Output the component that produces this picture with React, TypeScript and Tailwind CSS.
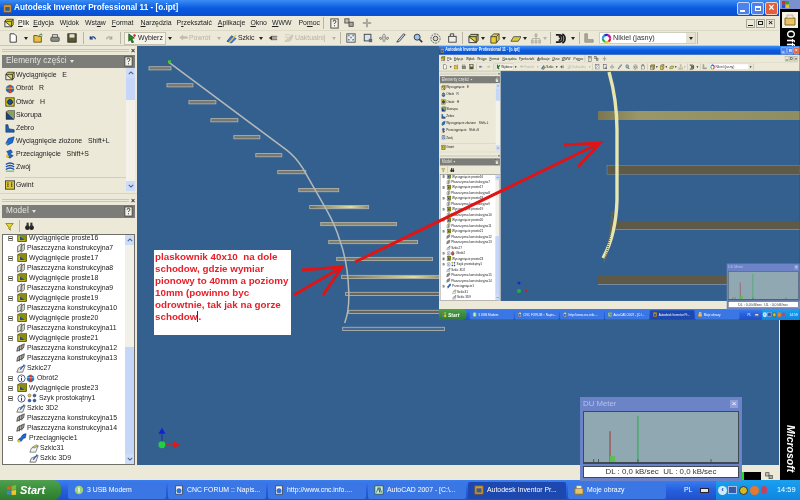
import React from 'react';

const Ico: React.FC<{ k: string; className?: string }> = ({ k, className = '' }) => {
  const shapes: Record<string, React.ReactNode> = {
    feature: <><rect x="1" y="2" width="10" height="8" fill="#d9c81e" stroke="#3a3a10" /><rect x="3.5" y="4" width="5.5" height="4.5" fill="#17508f" /><path d="M1 2l2-1.5h9V8l-1 2" fill="#8b8b1a" stroke="#3a3a10" strokeWidth=".6" /></>,
    plane: <path d="M2 4l5-3v7l-5 3zM6 4l4-3v7l-4 3z" fill="#e8e8e0" stroke="#55554f" />,
    planeDark: <><path d="M2 5l8-4-1 5-8 4z" fill="#b8b8b0" stroke="#454540" /><path d="M4 3v7M7 2v7" stroke="#454540" /></>,
    sketch: <><path d="M1 11l2-5 8-3-3 8z" fill="#eeeeee" stroke="#66665f" /><path d="M5 8l5-6" stroke="#3060b0" strokeWidth="1.6" /></>,
    sketchA: <><path d="M1 11l2-5 8-3-3 8z" fill="#f4f4ee" stroke="#77776f" /><path d="M4 5l5-3 2 2-5 2z" fill="#f0c030" stroke="#2f65c0" strokeWidth=".6" /></>,
    info: <><circle cx="6" cy="6" r="4.8" fill="#ffffff" stroke="#26305f" /><path d="M6 3v1M6 5v4" stroke="#203090" strokeWidth="1.4" /></>,
    revolve: <><ellipse cx="6" cy="6" rx="5" ry="4.5" fill="#1d6fc0" /><rect x="4.5" y="1" width="3" height="10" fill="#d93a2c" /><path d="M1 5h10" stroke="#f0d040" /></>,
    pattern: <><circle cx="3" cy="3" r="1.8" fill="#f0d030" stroke="#333" strokeWidth=".5" /><circle cx="9" cy="3" r="1.8" fill="#2a60c0" stroke="#333" strokeWidth=".5" /><circle cx="3" cy="9" r="1.8" fill="#2a60c0" stroke="#333" strokeWidth=".5" /><circle cx="9" cy="9" r="1.8" fill="#2a60c0" stroke="#333" strokeWidth=".5" /></>,
    sweep: <><path d="M1 10c1-5 3-3 4-5s2-4 6-4l-1 5c-3 0-3 2-4 3s-3 2-5 1z" fill="#1d66d0" stroke="#0e2f80" strokeWidth=".6" /><circle cx="2.5" cy="10" r="1.6" fill="#e9c820" /></>,
    hole: <><rect x="1" y="1" width="10" height="10" fill="#d9c81e" stroke="#3a3a10" /><circle cx="6" cy="6" r="3" fill="#1b4d9a" stroke="#0b1d40" /></>,
    shell: <><rect x="1.5" y="2.5" width="9" height="8.5" fill="#17408f" stroke="#222" /><path d="M1.5 2.5l2-2h8v8l-1 2.5" fill="#8ba05a" stroke="#333" strokeWidth=".6" /></>,
    rib: <path d="M1 11V2h2.5l1 5 6.5 1v3z" fill="#1f60b0" stroke="#153050" strokeWidth=".7" />,
    loft: <><path d="M1 9l3-6 7-2-2 7-6 3z" fill="#1e6ad6" stroke="#0f3080" strokeWidth=".7" /><path d="M1 9l2 2 1-3z" fill="#60b030" /></>,
    sweepP: <><path d="M2 3l5-2 2 3-3 2 4 2-4 3-4-2 2-3z" fill="#1c62c8" stroke="#143070" strokeWidth=".6" /><circle cx="3" cy="9" r="1.7" fill="#e5c520" /></>,
    coil: <><path d="M1 3c3-2 7-2 10 0M1 6c3-2 7-2 10 0M1 9c3-2 7-2 10 0" fill="none" stroke="#1c50b0" strokeWidth="1.8" /><path d="M1 11h10" stroke="#40a040" /></>,
    thread: <><rect x=".5" y="1" width="11" height="10" fill="#dcc92a" stroke="#333" /><path d="M3.5 3v6M8 3v6" stroke="#1a1a60" strokeWidth="1.5" strokeDasharray="1.2 .8" /></>,
    filter: <path d="M1 2h10L7 7v4L5 9V7z" fill="#e8d820" stroke="#5a5a10" strokeWidth=".8" />,
    bin: <><circle cx="3.5" cy="8" r="2.8" fill="#222" /><circle cx="8.5" cy="8" r="2.8" fill="#222" /><rect x="2.5" y="2" width="2.5" height="5" fill="#333" /><rect x="7" y="2" width="2.5" height="5" fill="#333" /></>,
    part: <><path d="M1 4l2-2.5h8V8l-2 2.5z" fill="#ddd22a" stroke="#333" /><path d="M1 4h8v6.5H1zM9 4l2-2.5" fill="none" stroke="#333" /></>,
    part2: <><path d="M2 4l3-3h6v6l-3 4H2z" fill="#e9d22a" stroke="#444" /><path d="M2 4h6v7M8 4l3-3" fill="none" stroke="#444" /></>,
    flat: <path d="M1 9l3-5h8l-3 5z" fill="#d9cc30" stroke="#555" />,
    help: <><rect x="2" y="1" width="8" height="10" fill="#f4f2e6" stroke="#444" /><path d="M4.5 4c0-2 3-2 3 0 0 1-1.500 1-1.500 2.500M6 8v1" fill="none" stroke="#222" /></>,
    cubes: <><rect x="1" y="1" width="5" height="5" fill="#c0c0b0" stroke="#444" /><rect x="6" y="5" width="5" height="5" fill="#a8a89a" stroke="#444" /></>,
    plus: <path d="M6 1v10M1 6h10" stroke="#a9a9a0" strokeWidth="2.5" />,
    newdoc: <path d="M2.500 1h5l2.500 2.500V11h-7.500z" fill="#fff" stroke="#222" />,
    open: <><path d="M1 3h4l1 1h4v7H1z" fill="#e8c048" stroke="#5a4a10" /><path d="M7 3l3-2 1 2" fill="none" stroke="#208020" /></>,
    print: <><rect x="1" y="5" width="10" height="5" rx="1" fill="#8d8d88" stroke="#444" /><rect x="3" y="2" width="6" height="3" fill="#ddd" stroke="#555" /></>,
    save: <><rect x="1" y="1" width="10" height="10" fill="#5a5a30" stroke="#222" /><rect x="3" y="1.500" width="6" height="4" fill="#e4e4d8" /></>,
    undo: <path d="M3 6c2-3 6-3 7 1M3 3v3.500h3.500" fill="none" stroke="#1a3a8a" strokeWidth="1.500" />,
    redo: <path d="M9 6C7 3 3 3 2 7M9 3v3.500H5.500" fill="none" stroke="#a8a8a0" strokeWidth="1.500" />,
    select: <><path d="M2 1l7 5-3 1 2 4-2 1-2-4-2 2z" fill="#208a20" stroke="#103010" strokeWidth=".6" /><circle cx="9" cy="3" r="1.500" fill="#d02020" /></>,
    back: <path d="M1 6l4-3v2h6v2H5v2z" fill="#c2c0b2" stroke="#a5a498" strokeWidth=".5" />,
    sketchT: <><path d="M1 9l5-6 5 3-5 5z" fill="#3d7bd8" stroke="#1a3a90" strokeWidth=".7" /><path d="M3 11l8-9" stroke="#eec93a" strokeWidth="1.500" /></>,
    arrows: <><path d="M1 6l4-3v6z" fill="#333" /><path d="M5 4h6M5 6h6M5 8h6" stroke="#555" /></>,
    update: <path d="M1 10L10 2l1 2-3 1 2 1-3 1 2 1-3 2zM1 2h6M1 5h4" stroke="#b9b8a9" fill="#d2d1c2" strokeWidth=".7" />,
    fit: <><rect x="1" y="1" width="10" height="10" fill="#e6eef8" stroke="#444" /><path d="M3 3h1M8 3h1M3 8h1M8 8h1M5.500 5.500h1" stroke="#111" strokeWidth="1.800" /></>,
    zoomBox: <><rect x="1.500" y="1.500" width="8" height="8" fill="#d4e4f4" stroke="#333" /><rect x="7" y="7" width="4" height="4" fill="#667" /></>,
    pan: <path d="M6 1l2 3H7v2h3V5l2 1-2 2V7H7v3H5V7H2v1L0 6l2-1v1h3V4H4z" fill="#f6f4ea" stroke="#444" strokeWidth=".6" />,
    zoomT: <path d="M1 11l3-1 7-8-2-1-7 8z" fill="#ccd8e8" stroke="#334" />,
    mag: <><circle cx="5" cy="5" r="3.600" fill="#9ec6ea" stroke="#223" /><path d="M7.500 7.500L11 11" stroke="#333" strokeWidth="2" /></>,
    orbit: <><circle cx="6" cy="6" r="2.500" fill="#d8d8d0" stroke="#444" /><path d="M1 6a5 5 0 0 1 10 0M11 6a5 5 0 0 1-10 0" fill="none" stroke="#555" strokeDasharray="2 1" /></>,
    look: <><rect x="2" y="4" width="9" height="7" fill="#eee" stroke="#333" /><path d="M4 4V1h4v3" fill="none" stroke="#333" /></>,
    tree: <path d="M6 1v3M2 6h8M2 6v2M10 6v2M6 4v4M1 8h2v3H1zM5 8h2v3H5zM9 8h2v3H9zM5 1h2v3H5z" fill="#c8c7b8" stroke="#b2b1a3" />,
    d3: <path d="M1 2h3c6 0 6 8 0 8H1M4 4c3 0 3 4 0 4M8 1c4 2 4 8 0 10" fill="none" stroke="#1f1f1f" strokeWidth="1.800" />,
    blocks: <path d="M1 1h3v7h7v3H1z" fill="#aaa99a" stroke="#8f8e80" />,
    wheel: <><circle cx="6" cy="6" r="4" fill="none" stroke="#e02020" strokeWidth="2.400" strokeDasharray="4 30" /><circle cx="6" cy="6" r="4" fill="none" stroke="#e0d020" strokeWidth="2.400" strokeDasharray="4 30" strokeDashoffset="-4" /><circle cx="6" cy="6" r="4" fill="none" stroke="#20b040" strokeWidth="2.400" strokeDasharray="4 30" strokeDashoffset="-8" /><circle cx="6" cy="6" r="4" fill="none" stroke="#20a0e0" strokeWidth="2.400" strokeDasharray="4 30" strokeDashoffset="-12" /><circle cx="6" cy="6" r="4" fill="none" stroke="#2030c0" strokeWidth="2.400" strokeDasharray="4 30" strokeDashoffset="-16" /><circle cx="6" cy="6" r="4" fill="none" stroke="#c020a0" strokeWidth="2.400" strokeDasharray="6 30" strokeDashoffset="-20" /></>,
    app: <><rect x="1" y="1" width="10" height="10" fill="#d49a3a" stroke="#7a5520" /><rect x="3" y="4" width="6" height="5" fill="#3a5a8a" /></>,
    bulb: <><circle cx="6" cy="6" r="5" fill="#9ed27a" /><path d="M6 3v6" stroke="#ffffff" strokeWidth="1.500" /></>,
    ie: <><rect x="2" y="1" width="8" height="10" fill="#f4f4f4" stroke="#444" /><circle cx="6" cy="7" r="3" fill="#2e6fd8" /></>,
    acad: <><rect x="1" y="1" width="10" height="10" fill="#d8e6d8" stroke="#255" /><path d="M3 9l2-6 2 6M7 9V3l2 6" fill="none" stroke="#1a6a50" /></>,
    folder: <><path d="M1 4h10v7H1z" fill="#e7c266" stroke="#8a6a20" /><rect x="3" y="1" width="6" height="3" fill="#f0ead0" stroke="#8a8a70" strokeWidth=".5" /></>,
  };
  return <svg viewBox="0 0 12 12" className={`shrink-0 ${className}`}>{shapes[k]}</svg>;
};

const Dd: React.FC<{ className?: string; off?: boolean }> = ({ className = '', off }) => (
  <span className={`shrink-0 w-0 h-0 border-x-[2.5px] border-x-transparent border-t-[3px] ${off ? 'border-t-[#b5b4a6]' : 'border-t-[#222]'} ${className}`} />
);
const Sep: React.FC<{ className?: string }> = ({ className = '' }) => <span className={`shrink-0 w-px h-[12px] bg-[#b8b6a4] ${className}`} />;

const rows: { kind: string; text: string }[] = [
  { kind: 'f', text: 'Wyciągnięcie proste16' },
  { kind: 'p', text: 'Płaszczyzna konstrukcyjna7' },
  { kind: 'f', text: 'Wyciągnięcie proste17' },
  { kind: 'p', text: 'Płaszczyzna konstrukcyjna8' },
  { kind: 'f', text: 'Wyciągnięcie proste18' },
  { kind: 'p', text: 'Płaszczyzna konstrukcyjna9' },
  { kind: 'f', text: 'Wyciągnięcie proste19' },
  { kind: 'p', text: 'Płaszczyzna konstrukcyjna10' },
  { kind: 'f', text: 'Wyciągnięcie proste20' },
  { kind: 'p', text: 'Płaszczyzna konstrukcyjna11' },
  { kind: 'f', text: 'Wyciągnięcie proste21' },
  { kind: 'd', text: 'Płaszczyzna konstrukcyjna12' },
  { kind: 'd', text: 'Płaszczyzna konstrukcyjna13' },
  { kind: 'z', text: 'Szkic27' },
  { kind: 'o', text: 'Obrót2' },
  { kind: 'f', text: 'Wyciągnięcie proste23' },
  { kind: 'y', text: 'Szyk prostokątny1' },
  { kind: 's', text: 'Szkic 3D2' },
  { kind: 'd', text: 'Płaszczyzna konstrukcyjna15' },
  { kind: 'd', text: 'Płaszczyzna konstrukcyjna14' },
  { kind: 'w', text: 'Przeciągnięcie1' },
  { kind: 'c', text: 'Szkic31' },
  { kind: 'c2', text: 'Szkic 3D9' },
];

const Expand = () => (
  <span className="shrink-0 ml-[5px] w-[5px] h-[5px] border border-[#8a8a80] bg-white flex items-center justify-center">
    <span className="block w-[3px] h-px bg-[#333]" />
  </span>
);

const TreeRow: React.FC<{ kind: string; text: string }> = ({ kind, text }) => {
  const plus = ['f', 'o', 'y', 'w'].includes(kind);
  return (
    <div className="h-[10px] flex items-center text-[6.9px] text-[#222] whitespace-nowrap">
      {plus ? <Expand /> : <span className="shrink-0 w-[10px]" />}
      {kind === 'c' || kind === 'c2' ? <span className="shrink-0 w-[13px]" /> : null}
      {kind === 'f' && <Ico k="feature" className="w-[10px] h-[10px] ml-[4px]" />}
      {kind === 'p' && <Ico k="plane" className="w-[10px] h-[10px] ml-[3px]" />}
      {kind === 'd' && <Ico k="planeDark" className="w-[10px] h-[10px] ml-[3px]" />}
      {kind === 's' && <Ico k="sketch" className="w-[10px] h-[10px] ml-[3px]" />}
      {kind === 'z' && <Ico k="sketch" className="w-[10px] h-[10px] ml-[3px]" />}
      {kind === 'o' && <><Ico k="info" className="w-[9px] h-[9px] ml-[4px]" /><Ico k="revolve" className="w-[9px] h-[9px]" /></>}
      {kind === 'y' && <><Ico k="info" className="w-[9px] h-[9px] ml-[4px]" /><Ico k="pattern" className="w-[10px] h-[10px] ml-[1px]" /></>}
      {kind === 'w' && <Ico k="sweep" className="w-[10px] h-[10px] ml-[4px]" />}
      {kind === 'c' && <Ico k="sketchA" className="w-[10px] h-[10px] ml-[3px]" />}
      {kind === 'c2' && <Ico k="sketch" className="w-[10px] h-[10px] ml-[3px]" />}
      <span className={plus ? 'ml-[2px]' : 'ml-[1px]'}>{text}</span>
    </div>
  );
};

const ScrollBtn: React.FC<{ up?: boolean }> = ({ up }) => (
  <div className="h-[10px] bg-[#cfdcf6] flex items-center justify-center">
    <svg viewBox="0 0 8 5" className="w-[6px] h-[4px]"><path d={up ? 'M1 4l3-3 3 3' : 'M1 1l3 3 3-3'} fill="none" stroke="#44639f" strokeWidth="1.400" /></svg>
  </div>
);

const PanelHandle = () => (
  <div className="h-[9px] flex items-center pl-[2px] pr-[2px] gap-[2px]">
    <div className="flex-1 h-[3px] border-y border-[#c9c7b6]" />
    <span className="text-[7px] leading-none font-bold text-[#222]">×</span>
  </div>
);

const PanelHeader: React.FC<{ title: string }> = ({ title }) => (
  <div className="h-[13px] mx-[2px] bg-[#7c7c78] flex items-center justify-between text-[#e6e6e0] text-[8.2px] tracking-[.1px] pl-[4px] pr-[1px]">
    <span className="flex items-center gap-[3px]">{title}<Dd className="!border-t-[#e6e6e0]" /></span>
    <Ico k="help" className="w-[11px] h-[11px]" />
  </div>
);

const LeftPanel = () => (
  <div className="w-[137px] shrink-0 flex flex-col bg-[#ece9d8]">
    <PanelHandle />
    <PanelHeader title="Elementy części" />
    <div className="h-[123px] flex pl-[5px] pr-[2px] relative">
      <div className="flex-1 flex flex-col text-[6.9px] text-[#222] whitespace-pre pt-[1px]">
        {[
          ['part', 'Wyciągnięcie   E'],
          ['revolve', 'Obrót   R'],
          ['hole', 'Otwór   H'],
          ['shell', 'Skorupa'],
          ['rib', 'Zebro'],
          ['loft', 'Wyciągnięcie złożone   Shift+L'],
          ['sweepP', 'Przeciągnięcie   Shift+S'],
          ['coil', 'Zwój'],
        ].map(([k, t]) => (
          <div key={t} className="h-[13.100px] flex items-center gap-px">
            <Ico k={k} className="w-[10px] h-[10px]" />
            <span>{t}</span>
          </div>
        ))}
        <div className="mt-[3px] border-t border-[#d0cebc] pt-[3px] h-[13px] flex items-center gap-px">
          <Ico k="thread" className="w-[10px] h-[10px]" />
          <span>Gwint</span>
        </div>
      </div>
      <div className="w-[9px] flex flex-col justify-between bg-[#f4f2e8]">
        <div><ScrollBtn up /><div className="h-[22px] bg-[#c6d6f8]" /></div>
        <ScrollBtn />
      </div>
    </div>
    <div className="h-px mt-[2px] bg-[#d6d4c2]" />
    <div className="mt-[2px]"><PanelHandle /></div>
    <PanelHeader title="Model" />
    <div className="h-[16px] flex items-center pl-[5px]">
      <Ico k="filter" className="w-[9px] h-[9px]" />
      <Sep className="ml-[5px]" />
      <Ico k="bin" className="w-[11px] h-[10px] ml-[4px]" />
    </div>
    <div className="mx-[2px] flex-1 min-h-0 flex bg-white border border-[#6f6f6a] overflow-hidden">
      <div className="flex-1 min-w-0 overflow-hidden">
        <div className="mt-[-2px]">
          {rows.map(r => <TreeRow key={r.text} kind={r.kind} text={r.text} />)}
          <div className="h-[10px] flex items-center pl-[15px]"><span className="block w-[8px] h-[8px] rounded-full bg-[#d8401f]" /></div>
        </div>
      </div>
      <div className="w-[9px] shrink-0 bg-[#f1f1ea] flex flex-col justify-between">
        <ScrollBtn up />
        <div className="h-[107px] mt-auto bg-[#c6d6f8]" />
        <ScrollBtn />
      </div>
    </div>
  </div>
);

const TitleBar = () => (
  <div className="h-[16px] shrink-0 bg-gradient-to-b from-[#3b8df5] via-[#0a5be0] to-[#0a4fd0] flex items-center pl-[3px] pr-[1px] text-white text-[8.2px] font-bold">
    <Ico k="app" className="w-[9px] h-[9px]" />
    <span className="ml-[2px] whitespace-nowrap">Autodesk Inventor Professional 11 - [o.ipt]</span>
    <div className="ml-auto flex gap-[1px]">
      <div className="w-[13px] h-[13px] rounded-[2px] bg-[#4d82ee] border border-[#c8d8f8] flex items-end pl-[2px] pb-[2px]"><span className="block w-[5px] h-[2px] bg-white" /></div>
      <div className="w-[13px] h-[13px] rounded-[2px] bg-[#4d82ee] border border-[#c8d8f8] flex items-center justify-center"><span className="block w-[6px] h-[5px] border border-t-2 border-white" /></div>
      <div className="w-[13px] h-[13px] rounded-[2px] bg-[#e0623a] border border-[#f4d0c4] flex items-center justify-center text-[10px] leading-none">×</div>
    </div>
  </div>
);

const MenuBar = () => (
  <div className="h-[15px] shrink-0 bg-[#ece9d8] flex items-center pl-[4px] pr-[4px] text-[6.9px] text-[#222] whitespace-nowrap border-b border-[#dcd9c6]">
    <Ico k="part" className="w-[10px] h-[10px]" />
    <span className="ml-[3px] px-[1px] bg-[#f5f3e8]"><u>P</u>lik</span>
    <span className="ml-[3px]"><u>E</u>dycja</span>
    <span className="ml-[6px]">W<u>i</u>dok</span>
    <span className="ml-[6px]">Wst<u>a</u>w</span>
    <span className="ml-[6px]"><u>F</u>ormat</span>
    <span className="ml-[7px]"><u>N</u>arzędzia</span>
    <span className="ml-[5px]">P<u>r</u>zekształć</span>
    <span className="ml-[6px]"><u>A</u>plikacje</span>
    <span className="ml-[5px]"><u>O</u>kno</span>
    <span className="ml-[5px]"><u>W</u>WW</span>
    <span className="ml-[7px]">Po<u>m</u>oc</span>
    <Sep className="ml-[3px]" />
    <Ico k="help" className="w-[11px] h-[11px] ml-[5px]" />
    <Ico k="cubes" className="w-[10px] h-[10px] ml-[4px]" />
    <Ico k="plus" className="w-[10px] h-[10px] ml-[8px]" />
    <div className="ml-auto flex gap-[1px]">
      <span className="w-[9px] h-[9px] border border-[#aaa898] flex items-end justify-center"><span className="block w-[5px] h-px mb-px bg-[#222]" /></span>
      <span className="w-[9px] h-[9px] border border-[#aaa898] flex items-center justify-center"><span className="block w-[5px] h-[4px] border border-[#222]" /></span>
      <span className="w-[9px] h-[9px] border border-[#aaa898] flex items-center justify-center text-[8px] leading-none font-bold">×</span>
    </div>
  </div>
);

const ToolBar = () => (
  <div className="h-[15px] shrink-0 bg-[#ece9d8] flex items-center text-[6.9px] text-[#222] whitespace-nowrap border-b border-[#c9c7b4]">
    <Ico k="newdoc" className="w-[10px] h-[10px] ml-[8px]" />
    <Dd className="ml-[6px]" />
    <Ico k="open" className="w-[10px] h-[10px] ml-[5px]" />
    <Ico k="print" className="w-[10px] h-[10px] ml-[7px]" />
    <Ico k="save" className="w-[10px] h-[10px] ml-[7px]" />
    <Sep className="ml-[6px]" />
    <Ico k="undo" className="w-[9px] h-[9px] ml-[4px]" />
    <Ico k="redo" className="w-[9px] h-[9px] ml-[8px]" />
    <Sep className="ml-[6px]" />
    <div className="ml-[3px] w-[42px] h-[13px] shrink-0 border border-[#c5c3b0] bg-[#f6f4ea] flex items-center pl-[2px] gap-[1px]"><Ico k="select" className="w-[10px] h-[10px]" />Wybierz</div>
    <Dd className="ml-[2px]" />
    <div className="ml-[7px] w-[31px] shrink-0 flex items-center text-[#b5b4a6] gap-[1px]"><Ico k="back" className="w-[9px] h-[9px]" />Powrót</div>
    <Dd off className="ml-[7px]" />
    <div className="ml-[5px] w-[26px] shrink-0 flex items-center gap-[1px]"><Ico k="sketchT" className="w-[11px] h-[11px]" />Szkic</div>
    <Dd className="ml-[7px]" />
    <Ico k="arrows" className="w-[10px] h-[10px] ml-[5px]" />
    <div className="ml-[6px] w-[42px] shrink-0 flex items-center text-[#b5b4a6] gap-[1px]"><Ico k="update" className="w-[10px] h-[10px]" />Uaktualnij</div>
    <Dd off className="ml-[6px]" />
    <Sep className="ml-[4px]" />
    <Ico k="fit" className="w-[10px] h-[10px] ml-[5px]" />
    <Ico k="zoomBox" className="w-[10px] h-[10px] ml-[7px]" />
    <Ico k="pan" className="w-[10px] h-[10px] ml-[6px]" />
    <Ico k="zoomT" className="w-[10px] h-[10px] ml-[7px]" />
    <Ico k="mag" className="w-[10px] h-[10px] ml-[7px]" />
    <Ico k="orbit" className="w-[11px] h-[11px] ml-[7px]" />
    <Ico k="look" className="w-[10px] h-[10px] ml-[6px]" />
    <Sep className="ml-[5px]" />
    <Ico k="part" className="w-[11px] h-[11px] ml-[5px]" />
    <Dd className="ml-[2px]" />
    <Ico k="part2" className="w-[11px] h-[11px] ml-[4px]" />
    <Dd className="ml-[2px]" />
    <Ico k="flat" className="w-[11px] h-[11px] ml-[4px]" />
    <Dd className="ml-[2px]" />
    <Ico k="tree" className="w-[12px] h-[11px] ml-[3px]" />
    <Dd off className="ml-[1px]" />
    <Sep className="ml-[3px]" />
    <Ico k="d3" className="w-[11px] h-[11px] ml-[4px]" />
    <Dd className="ml-[5px]" />
    <Sep className="ml-[4px]" />
    <Ico k="blocks" className="w-[10px] h-[10px] ml-[4px]" />
    <div className="ml-[5px] w-[97px] h-[12px] shrink-0 bg-white border border-[#d0cebc] flex items-center text-[7.300px] text-[#333] pl-[1px]">
      <Ico k="wheel" className="w-[11px] h-[11px]" />
      <span className="ml-px">Nikiel (jasny)</span>
      <span className="ml-auto w-[9px] h-full bg-[#e6e3d2] flex items-center justify-center"><Dd /></span>
    </div>
    <Sep className="ml-px" />
  </div>
);

const taskItems: [string, string][] = [
  ['bulb', '3 USB Modem'],
  ['ie', 'CNC FORUM :: Napis...'],
  ['ie', 'http://www.cnc.info....'],
  ['acad', 'AutoCAD 2007 - [C:\\...'],
  ['app', 'Autodesk Inventor Pr...'],
  ['folder', 'Moje obrazy'],
];

const TaskBar = () => (
  <div className="h-[20px] shrink-0 bg-gradient-to-b from-[#3a7ff0] via-[#2660de] to-[#1f50c8] flex items-center text-white text-[6.900px] whitespace-nowrap">
    <div className="w-[61px] h-full shrink-0 rounded-r-[8px] bg-gradient-to-b from-[#4fa04f] via-[#3a8f3a] to-[#2f7a30] flex items-center pl-[6px] gap-[3px] font-bold italic text-[11px]">
      <svg viewBox="0 0 12 12" className="w-[11px] h-[11px]">
        <path d="M1 2l4-1v4l-4 .500z" fill="#e8562a" />
        <path d="M6 1l5-1v5l-5 .500z" fill="#7cbc3a" />
        <path d="M1 6.500l4-.500v4l-4 1z" fill="#3f80e0" />
        <path d="M6 6l5-.500v5l-5 .500z" fill="#f2c230" />
      </svg>
      Start
    </div>
    <div className="ml-[7px] flex gap-[2px] h-[17px]">
      {taskItems.map(([k, t]) => (
        <div key={t} className={`w-[98px] rounded-[2px] flex items-center pl-[6px] gap-[3px] overflow-hidden ${t.startsWith('Autodesk') ? 'bg-[#1c48b0]' : 'bg-[#3b77e4]'}`}>
          <Ico k={k} className="w-[10px] h-[10px]" />
          <span>{t}</span>
        </div>
      ))}
    </div>
    <span className="ml-[18px]">PL</span>
    <span className="ml-[8px] w-[9px] h-[5px] bg-[#e4e4e4] border border-[#223] shrink-0" />
    <div className="ml-auto w-[84px] h-full shrink-0 bg-gradient-to-b from-[#1aa0ee] to-[#0f86e0] flex items-center pl-[2px] gap-[1px]">
      <span className="w-[9px] h-[9px] rounded-full bg-white/80 text-[#2050b0] text-[8px] leading-[8px] font-bold text-center">‹</span>
      <span className="w-[9px] h-[8px] bg-[#3858a8] border border-white/60" />
      <span className="ml-[1px] w-[9px] h-[9px] rounded-full bg-[#d8b820] border border-[#333]" />
      <span className="ml-[1px] w-[9px] h-[9px] rounded-full bg-[#e87830]" />
      <span className="ml-[1px] w-[6px] h-[8px] rounded-full bg-[#c84060]" />
      <span className="ml-[9px] text-[7.400px]">14:59</span>
    </div>
  </div>
);

const OfficeStrip = () => (
  <div className="w-[21px] shrink-0 border-l border-[#ece9d8] bg-black flex flex-col items-center justify-between overflow-hidden">
    <div className="flex flex-col items-center w-full">
      <div className="w-full h-[9px] bg-[#7a90d0] pl-[2px] pt-[1px]">
        <svg viewBox="0 0 8 8" className="w-[7px] h-[7px]">
          <rect x="0" y="0" width="4" height="4" fill="#d03020" /><rect x="4" y="0" width="4" height="4" fill="#30a040" /><rect x="0" y="4" width="4" height="4" fill="#3050d0" /><rect x="4" y="4" width="4" height="4" fill="#e8c020" />
        </svg>
      </div>
      <div className="mt-[3px] w-[16px] h-[16px] bg-[#f4f2e4] flex items-center justify-center"><Ico k="folder" className="w-[12px] h-[12px]" /></div>
      <span className="mt-[2px] text-white text-[10.500px] font-bold [writing-mode:vertical-rl] tracking-[.5px]">Office</span>
    </div>
    <span className="mb-[8px] text-white text-[10.500px] font-bold italic [writing-mode:vertical-rl]">Microsoft</span>
  </div>
);

const StatusBar = () => (
  <div className="h-[15px] shrink-0 bg-[#ece9d8] flex items-end justify-end">
    <div className="w-[22px] h-[8px] bg-black mr-[4px] flex"><span className="block w-[5px] bg-[#20e020]" /></div>
    <Ico k="cubes" className="w-[8px] h-[8px] mr-[6px]" />
  </div>
);

const DuMeter: React.FC<{ className: string }> = ({ className }) => (
  <div className={`absolute w-[162px] h-[84px] bg-[#6c83c8] flex flex-col px-[3px] pb-[3px] ${className}`}>
    <div className="h-[14px] shrink-0 flex items-center justify-between text-[#b4c2e8] text-[7.800px]">
      <span>DU Meter</span>
      <span className="w-[8px] h-[8px] mr-[1px] bg-[#8f9fd8] text-white text-[8px] leading-[8px] text-center">×</span>
    </div>
    <div className="h-[53px] shrink-0 bg-[#8fa8b2] border border-[#3f4a55] border-b-2">
      <svg viewBox="0 0 156 52" className="w-full h-full">
        <path d="M25 20v32" stroke="#a03030" strokeWidth="1" />
        <path d="M54 4v48" stroke="#20b040" strokeWidth="1" />
        <path d="M25 46h5v6h-5zM29 46v6" fill="#5cc050" stroke="#5cc050" strokeWidth=".6" />
        <path d="M8 49v3M13 49v3M54 49v3M130 49v3" stroke="#554" />
      </svg>
    </div>
    <div className="mt-[2px] flex-1 min-h-0 bg-white border border-[#3f4a55] flex items-center justify-center text-[#333] text-[7.900px] whitespace-pre">DL : 0,0 kB/sec  UL : 0,0 kB/sec</div>
  </div>
);

const steps: [number, number, number, string][] = [
  [149, 171, 68, '#767670'],
  [167, 193, 85, '#767670'],
  [189, 216, 102, '#767670'],
  [211, 238, 120, '#767670'],
  [234, 260, 137, '#767670'],
  [256, 282, 155, '#767670'],
  [278, 306, 172, '#767670'],
  [299, 339, 190, '#807f72'],
  [310, 369, 207, 'url(#gold)'],
  [321, 397, 224, '#8a8970'],
  [329, 418, 242, '#7f7d68'],
  [337, 433, 259, '#7a7a66'],
  [342, 445, 277, 'url(#gold)'],
  [346, 445, 294, '#66655a'],
  [349, 445, 312, '#66655a'],
  [343, 445, 329, '#476a92'],
];

const Stairs = () => (
  <svg viewBox="137 46 643 419" className="absolute inset-0 w-full h-full">
    <defs>
      <linearGradient id="gold"><stop offset="0" stopColor="#6b6a58" /><stop offset=".7" stopColor="#e0dc9c" /><stop offset="1" stopColor="#8a8868" /></linearGradient>
    </defs>
    {steps.map(([a, b, y, c]) => (
      <rect key={y} x={a} y={y - 1.6} width={b - a} height="3.200" fill={c} stroke="#aeb0a8" strokeWidth=".9" />
    ))}
    <path d="M169 62L287 150Q296 157 303 168L327 210Q336 226 340 240Q348 262 349 290Q350 310 345 323" fill="none" stroke="#b4b8b6" strokeWidth="1.500" />
    <rect x="168" y="60" width="3" height="3" fill="#50c040" />
    {/* axis triad */}
    <path d="M162 445v-11" stroke="#1030a0" strokeWidth="1" />
    <path d="M162 428l-3.500 6h7z" fill="#1020d8" />
    <path d="M162 445h12" stroke="#b03030" strokeWidth="1" />
    <path d="M180 445l-6-3.500v7z" fill="#e01818" />
    <circle cx="162" cy="445" r="3.500" fill="#20d040" />
  </svg>
);

// the earlier screenshot pasted into the picture; drawn in page coordinates
const NestedScene = () => (
  <svg viewBox="137 46 663 419" className="absolute inset-0 w-full h-full">
    <g transform="translate(-973.4 -83.94) scale(2.2173 1.8248)">
      <defs>
        <linearGradient id="bar"><stop offset="0" stopColor="#7a7650" /><stop offset=".2" stopColor="#9a9668" /><stop offset="1" stopColor="#8e8e62" /></linearGradient>
      </defs>
      <rect x="598" y="111" width="202" height="9" fill="url(#bar)" />
      <rect x="607" y="165.500" width="193" height="9" fill="#5f5a48" stroke="#9aa3a8" strokeWidth=".4" />
      <rect x="612" y="221" width="188" height="8" fill="#5f5a48" />
      <path d="M615 229.500h185" stroke="#a0a8ac" strokeWidth=".6" />
      <rect x="598" y="276" width="202" height="8" fill="#5f5a48" />
      <path d="M598 284.500h202" stroke="#a0a8ac" strokeWidth=".6" />
      <path d="M609 72Q617 100 617 130L617 200Q616 235 603 258" fill="none" stroke="#e6e6ae" strokeWidth="3.400" />
      <path d="M612 212Q611 240 604 262" fill="none" stroke="#6f6d50" strokeWidth="2" strokeDasharray="1 1" />
      <circle cx="519" cy="283" r="1.500" fill="#1828d8" />
      <circle cx="519" cy="291" r="2" fill="#20b040" />
      <circle cx="526" cy="291" r="1.300" fill="#c82020" />
    </g>
  </svg>
);

const Screen: React.FC<{ nested?: boolean }> = ({ nested }) => (
  <div className="relative w-[800px] h-[500px] flex flex-col overflow-hidden font-['Liberation_Sans',Arial,sans-serif] bg-[#34608f]">
    <div className="flex-1 min-h-0 flex">
      <div className="flex-1 min-w-0 flex flex-col">
        <TitleBar />
        <MenuBar />
        <ToolBar />
        <div className="flex-1 min-h-0 flex">
          <LeftPanel />
          <div className="relative flex-1 min-w-0 bg-[#34608f]">{nested ? <NestedScene /> : <Stairs />}</div>
        </div>
        <StatusBar />
      </div>
      {!nested && <OfficeStrip />}
    </div>
    <TaskBar />
    <DuMeter className={nested ? 'left-[638px] top-[397px]' : 'left-[580px] top-[397px]'} />
  </div>
);

const App: React.FC = () => (
  <div className="relative w-[800px] h-[500px] overflow-hidden blur-[0.45px]">
    <Screen />
    {/* pasted screenshot */}
    <div className="absolute left-[439px] top-[46px] w-[361px] h-[274px] overflow-hidden">
      <div className="origin-top-left scale-x-[.451] scale-y-[.548] w-[800px] h-[500px]"><Screen nested /></div>
    </div>
    {/* red note and arrows drawn on top of the picture */}
    <div className="absolute left-[154px] top-[250px] w-[137px] h-[85px] bg-white pl-[1px] pt-px font-['Liberation_Sans',sans-serif] text-[9.800px] leading-[12px] font-bold text-[#e8202a] whitespace-pre">
      {'plaskownik 40x10  na dole\nschodow, gdzie wymiar\npionowy to 40mm a poziomy\n10mm (powinno byc\nodrowtnie, tak jak na gorze\n'}<span className="border-r border-[#333]">schodow</span>.
    </div>
    <svg viewBox="0 0 800 500" className="absolute inset-0 w-[800px] h-[500px]">
      <g fill="none" stroke="#e01414" strokeWidth="3">
        <path d="M355 262L600 143M564 145L600 143L578 167" />
        <path d="M294 295L342 267M302 270L342 267L323 295" />
      </g>
    </svg>
  </div>
);

export default App;
